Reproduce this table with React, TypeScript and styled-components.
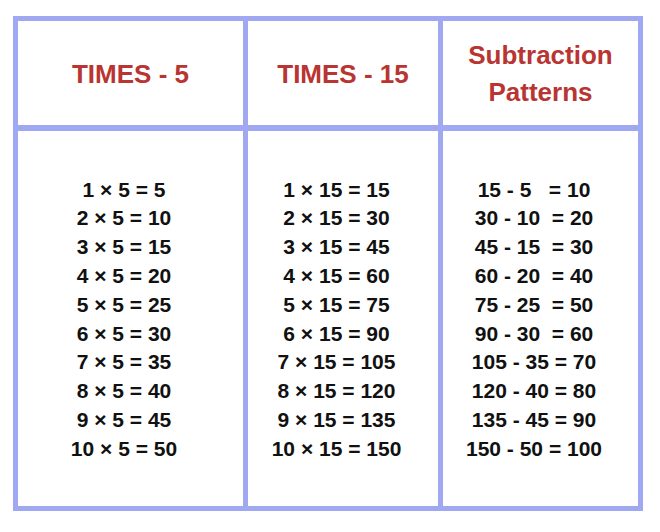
import styled, {createGlobalStyle} from 'styled-components';

const GlobalStyle = createGlobalStyle`
  html, body {
    margin: 0;
    padding: 0;
    background: #ffffff;
  }
`

const columns: { title: string[], rows: string[] }[] = [
    {
        title: ['TIMES - 5'],
        rows: Array.from({length: 10}, (_, i) => `${i + 1} × 5 = ${(i + 1) * 5}`),
    },
    {
        title: ['TIMES - 15'],
        rows: Array.from({length: 10}, (_, i) => `${i + 1} × 15 = ${(i + 1) * 15}`),
    },
    {
        title: ['Subtraction', 'Patterns'],
        rows: [
            '15 - 5   = 10',
            '30 - 10  = 20',
            '45 - 15  = 30',
            '60 - 20  = 40',
            '75 - 25  = 50',
            '90 - 30  = 60',
            '105 - 35 = 70',
            '120 - 40 = 80',
            '135 - 45 = 90',
            '150 - 50 = 100',
        ],
    },
]

export default function App() {
    return (
        <Page>
            <GlobalStyle/>
            <Table>
                {columns.map(({title}, idx) => (
                    <HeadCell key={`h${idx}`}>
                        {title.map((line, i) => <div key={i}>{line}</div>)}
                    </HeadCell>
                ))}
                {columns.map(({rows}, idx) => (
                    <BodyCell key={`b${idx}`}>
                        {rows.map((line, i) => <Line key={i}>{line}</Line>)}
                    </BodyCell>
                ))}
            </Table>
        </Page>
    );
}

const Page = styled.div`
  width: 660px;
  height: 532px;
  padding: 16px 0 0 13px;
  box-sizing: border-box;
  background: #ffffff;
`

const Table = styled.div`
  display: grid;
  grid-template-columns: 225px 190px 195px;
  grid-template-rows: 104px 375px;
  column-gap: 5px;
  row-gap: 6px;
  width: 630px;
  padding: 5px;
  box-sizing: border-box;
  background: #9fa8f0;
  font-family: "Liberation Sans", Arial, sans-serif;
  font-weight: bold;
`

const Cell = styled.div`
  background: #ffffff;
  display: flex;
  flex-direction: column;
  align-items: center;
  justify-content: center;
  text-align: center;
  box-sizing: border-box;
`

const HeadCell = styled(Cell)`
  color: #b83532;
  font-size: 26px;
  line-height: 37px;
  padding-top: 2px;
`

const BodyCell = styled(Cell)`
  color: #111111;
  font-size: 21px;
  line-height: 28.8px;
  padding: 2px 13px 0 0;
`

const Line = styled.div`
  white-space: pre;
`
